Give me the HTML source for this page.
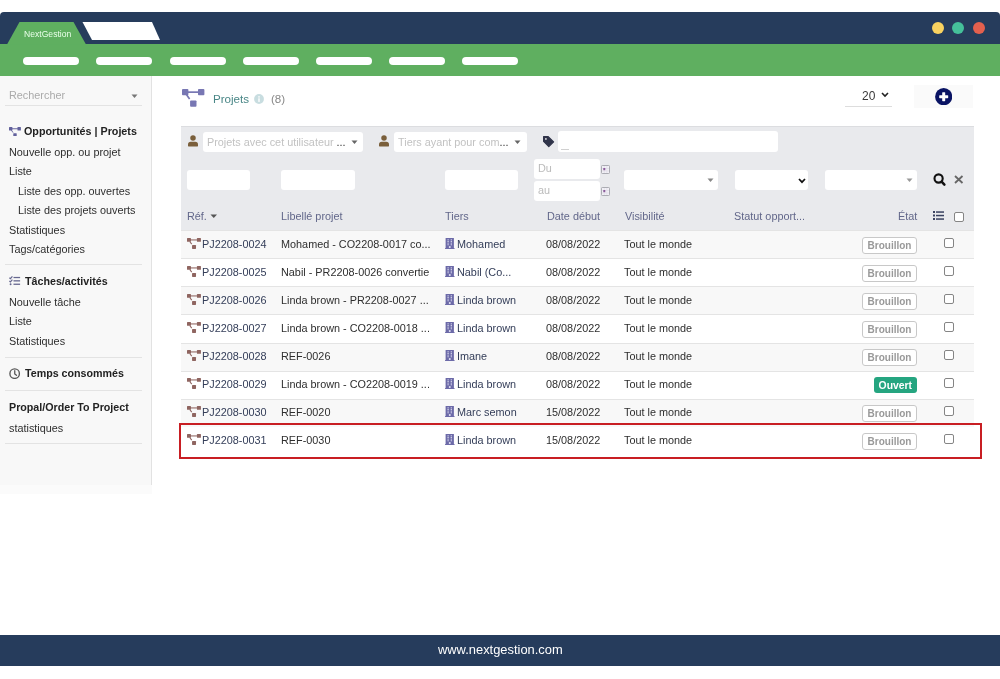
<!DOCTYPE html>
<html><head><meta charset="utf-8">
<style>
*{margin:0;padding:0;box-sizing:border-box}
html,body{width:1000px;height:679px;overflow:hidden;background:#fff;font-family:"Liberation Sans",sans-serif;position:relative;-webkit-font-smoothing:antialiased}
.abs{position:absolute}
.t{position:absolute;white-space:nowrap;will-change:transform}
.pill{position:absolute;top:57px;height:8px;width:56px;background:#fff;border-radius:4px}
.dot{position:absolute;top:21.7px;width:12px;height:12px;border-radius:50%}
.inp{position:absolute;background:#fff;border-radius:3px}
.sep{position:absolute;left:5px;width:137px;height:1px;background:#e3e3e3}
.badge{position:absolute;border-radius:3px;font-weight:bold;font-size:10px;text-align:center;will-change:transform}
.cb{position:absolute;width:10px;height:10px;border:1px solid #858585;border-radius:2px;background:#fff}
</style></head><body>
<div class="abs" style="left:0;top:12px;width:1000px;height:33px;background:#263c5c;border-radius:4px 4px 0 0"></div>
<div class="abs" style="left:0;top:44px;width:1000px;height:31.5px;background:#5faf60"></div>
<svg class="abs" style="left:0;top:0" width="200" height="50">
<polygon points="7,44.5 19.5,22 73.5,22 86,44.5" fill="#5faf60"/>
<polygon points="82.5,22 152,22 160,40 92,40" fill="#fff"/>
</svg>
<div class="t" style="left:23.5px;top:29.72px;font-size:8.6px;line-height:8.6px;color:#eaffea;font-weight:500;">NextGestion</div>
<div class="dot" style="left:932px;background:#f9d260"></div>
<div class="dot" style="left:952px;background:#45c09a"></div>
<div class="dot" style="left:973px;background:#e4604e"></div>
<div class="pill" style="left:23px"></div>
<div class="pill" style="left:96px"></div>
<div class="pill" style="left:170px"></div>
<div class="pill" style="left:243px"></div>
<div class="pill" style="left:316px"></div>
<div class="pill" style="left:389px"></div>
<div class="pill" style="left:462px"></div>
<div class="abs" style="left:0;top:75.5px;width:152px;height:409.5px;background:#f8f8f8;border-right:1px solid #e2e2e2"></div>
<div class="abs" style="left:0;top:485px;width:152px;height:9px;background:#fbfbfb"></div>
<div class="t" style="left:8.8px;top:89.72px;font-size:10.85px;line-height:10.85px;color:#aaa;">Rechercher</div>
<div class="abs" style="left:5px;top:104.5px;width:137px;height:1px;background:#e3e3e3"></div>
<svg class="abs" style="left:131px;top:94px" width="8" height="5"><polygon points="0.5,0.5 6.5,0.5 3.5,4" fill="#777"/></svg>
<svg class="abs" style="left:9.1px;top:126.5px" width="11.9" height="9.9" viewBox="0 0 22.4 17.7" preserveAspectRatio="none"><rect x="0" y="0" width="6.4" height="6.2" rx="0.9" fill="#62619c"/><rect x="16" y="0" width="6.4" height="6.2" rx="0.9" fill="#62619c"/><rect x="8.1" y="11.4" width="6.4" height="6.3" rx="0.9" fill="#62619c"/><rect x="5" y="2.3" width="12" height="1.7" fill="#62619c"/><path d="M4.4 5.6 L7.6 10" stroke="#62619c" stroke-width="1.7"/></svg>
<div class="t" style="left:24px;top:125.50px;font-size:10.75px;line-height:10.75px;color:#222;font-weight:bold;">Opportunités | Projets</div>
<div class="t" style="left:8.8px;top:146.62px;font-size:10.85px;line-height:10.85px;color:#2e2e2e;">Nouvelle opp. ou projet</div>
<div class="t" style="left:8.8px;top:165.62px;font-size:10.85px;line-height:10.85px;color:#2e2e2e;">Liste</div>
<div class="t" style="left:17.8px;top:185.52px;font-size:10.85px;line-height:10.85px;color:#2e2e2e;">Liste des opp. ouvertes</div>
<div class="t" style="left:17.8px;top:205.22px;font-size:10.85px;line-height:10.85px;color:#2e2e2e;">Liste des projets ouverts</div>
<div class="t" style="left:8.8px;top:225.12px;font-size:10.85px;line-height:10.85px;color:#2e2e2e;">Statistiques</div>
<div class="t" style="left:8.8px;top:244.42px;font-size:10.85px;line-height:10.85px;color:#2e2e2e;">Tags/catégories</div>
<div class="sep" style="top:263.8px"></div>
<svg class="abs" style="left:9px;top:276px" width="12" height="10" viewBox="0 0 12 10">
<path d="M0.4 1.7 L1.4 2.6 L3.4 0.4" stroke="#66688f" stroke-width="1.2" fill="none"/>
<path d="M0.4 5 L1.4 5.9 L3.4 3.7" stroke="#66688f" stroke-width="1.2" fill="none"/>
<circle cx="1.6" cy="8.2" r="0.95" fill="#66688f"/>
<rect x="4.5" y="0.9" width="6.6" height="1.25" fill="#66688f"/>
<rect x="4.5" y="4.2" width="6.6" height="1.3" fill="#66688f"/>
<rect x="4.5" y="7.6" width="6.6" height="1.3" fill="#66688f"/>
</svg>
<div class="t" style="left:25.2px;top:276.14px;font-size:10.7px;line-height:10.7px;color:#222;font-weight:bold;">Tâches/activités</div>
<div class="t" style="left:8.8px;top:297.12px;font-size:10.85px;line-height:10.85px;color:#2e2e2e;">Nouvelle tâche</div>
<div class="t" style="left:8.8px;top:316.42px;font-size:10.85px;line-height:10.85px;color:#2e2e2e;">Liste</div>
<div class="t" style="left:8.8px;top:335.82px;font-size:10.85px;line-height:10.85px;color:#2e2e2e;">Statistiques</div>
<div class="sep" style="top:357px"></div>
<svg class="abs" style="left:9px;top:367.5px" width="11.5" height="11.5" viewBox="0 0 11.5 11.5">
<circle cx="5.65" cy="5.65" r="4.75" stroke="#585858" stroke-width="1.35" fill="none"/>
<path d="M5.75 2.7 V6 L7.5 7.3" stroke="#585858" stroke-width="1.3" fill="none" stroke-linecap="round"/>
</svg>
<div class="t" style="left:25.2px;top:367.94px;font-size:10.7px;line-height:10.7px;color:#222;font-weight:bold;">Temps consommés</div>
<div class="sep" style="top:389.5px"></div>
<div class="t" style="left:8.8px;top:401.54px;font-size:10.7px;line-height:10.7px;color:#222;font-weight:bold;">Propal/Order To Project</div>
<div class="t" style="left:8.8px;top:422.82px;font-size:10.85px;line-height:10.85px;color:#2e2e2e;">statistiques</div>
<div class="sep" style="top:442.6px"></div>
<svg class="abs" style="left:182.3px;top:89px" width="22.4" height="17.7" viewBox="0 0 22.4 17.7" preserveAspectRatio="none"><rect x="0" y="0" width="6.4" height="6.2" rx="0.9" fill="#7877b3"/><rect x="16" y="0" width="6.4" height="6.2" rx="0.9" fill="#7877b3"/><rect x="8.1" y="11.4" width="6.4" height="6.3" rx="0.9" fill="#7877b3"/><rect x="5" y="2.3" width="12" height="1.7" fill="#7877b3"/><path d="M4.4 5.6 L7.6 10" stroke="#7877b3" stroke-width="1.7"/></svg>
<div class="t" style="left:213px;top:92.78px;font-size:11.6px;line-height:11.6px;color:#4a8787;">Projets</div>
<svg class="abs" style="left:254.2px;top:94.4px" width="10" height="10" viewBox="0 0 10 10"><circle cx="5" cy="5" r="4.9" fill="#c8dde0"/><rect x="4.3" y="2.2" width="1.4" height="1.4" fill="#fff"/><rect x="4.3" y="4.3" width="1.4" height="3.6" fill="#fff"/></svg>
<div class="t" style="left:271px;top:92.78px;font-size:11.6px;line-height:11.6px;color:#888;">(8)</div>
<div class="t" style="left:861.9px;top:90.04px;font-size:12px;line-height:12px;color:#3a3a3a;transform:scaleY(1.1);transform-origin:0 10.16px;">20</div>
<svg class="abs" style="left:880.7px;top:92.3px" width="8" height="6" viewBox="0 0 8 6"><path d="M1 1 L4 4 L7 1" stroke="#222" stroke-width="1.6" fill="none"/></svg>
<div class="abs" style="left:845px;top:105.6px;width:47px;height:1px;background:#ddd"></div>
<div class="abs" style="left:914px;top:85px;width:59px;height:23px;background:#fafafa"></div>
<svg class="abs" style="left:934.9px;top:87.9px" width="17.4" height="17.4" viewBox="0 0 17.4 17.4"><circle cx="8.7" cy="8.7" r="8.6" fill="#0a1464"/><rect x="4.2" y="7.2" width="9" height="3" rx="0.6" fill="#fff"/><rect x="7.2" y="4.2" width="3" height="9" rx="0.6" fill="#fff"/></svg>
<div class="abs" style="left:181px;top:126px;width:793px;height:105px;background:rgb(233,234,237);border-top:1px solid #dcdde0"></div>
<svg class="abs" style="left:188px;top:135px" width="10" height="12" viewBox="0 0 10 12"><circle cx="5" cy="3.1" r="2.75" fill="#7a5f3b"/><path d="M0 9.6 Q0 6.8 2.8 6.8 H7.2 Q10 6.8 10 9.6 V10.4 Q10 11.6 8.8 11.6 H1.2 Q0 11.6 0 10.4 Z" fill="#7a5f3b"/></svg>
<div class="inp" style="left:203px;top:132px;width:160px;height:19.5px"></div>
<div class="t" style="left:207px;top:137.12px;font-size:10.85px;line-height:10.85px;color:#c2c2c2;">Projets avec cet utilisateur <span style="color:#333">...</span></div>
<svg class="abs" style="left:351px;top:140px" width="7" height="5"><polygon points="0.5,0.5 6.5,0.5 3.5,4" fill="#666"/></svg>
<svg class="abs" style="left:379px;top:135px" width="10" height="12" viewBox="0 0 10 12"><circle cx="5" cy="3.1" r="2.75" fill="#7a5f3b"/><path d="M0 9.6 Q0 6.8 2.8 6.8 H7.2 Q10 6.8 10 9.6 V10.4 Q10 11.6 8.8 11.6 H1.2 Q0 11.6 0 10.4 Z" fill="#7a5f3b"/></svg>
<div class="inp" style="left:393.5px;top:132px;width:133px;height:19.5px"></div>
<div class="t" style="left:398px;top:137.12px;font-size:10.85px;line-height:10.85px;color:#c2c2c2;">Tiers ayant pour com<span style="color:#333">...</span></div>
<svg class="abs" style="left:514px;top:140px" width="7" height="5"><polygon points="0.5,0.5 6.5,0.5 3.5,4" fill="#666"/></svg>
<svg class="abs" style="left:542px;top:134.5px" width="13" height="13" viewBox="0 0 13 13"><path d="M1.6 1.6 H6.2 L11.6 6.9 L6.8 11.6 L1.6 6.4 Z" fill="#30344a" stroke="#30344a" stroke-width="1.2" stroke-linejoin="round"/><circle cx="3.9" cy="3.9" r="0.9" fill="#e6e7ea"/></svg>
<div class="inp" style="left:557.5px;top:131px;width:220px;height:21px"></div>
<div class="abs" style="left:561.2px;top:148.5px;width:7.5px;height:1px;background:#d0d0d0"></div>
<div class="inp" style="left:187.3px;top:170px;width:62.5px;height:20px"></div>
<div class="inp" style="left:281px;top:170px;width:73.5px;height:20px"></div>
<div class="inp" style="left:445px;top:170.4px;width:73px;height:19.6px"></div>
<div class="inp" style="left:534px;top:159px;width:65.5px;height:19.5px"></div>
<div class="inp" style="left:534px;top:181px;width:65.5px;height:19.5px"></div>
<div class="t" style="left:538px;top:163.32px;font-size:10.85px;line-height:10.85px;color:#bbb;">Du</div>
<div class="t" style="left:538px;top:185.12px;font-size:10.85px;line-height:10.85px;color:#bbb;">au</div>
<svg class="abs" style="left:601px;top:165px" width="9" height="9" viewBox="0 0 9 9"><rect x="0.5" y="0.5" width="8" height="8" rx="0.8" fill="#f2f1f6" stroke="#a4a4ac" stroke-width="0.9"/><path d="M1 3.5 H8 M1 6 H8 M3.3 1 V8 M5.8 1 V8" stroke="#ddd8e6" stroke-width="0.6"/><rect x="2.3" y="3" width="2" height="2.2" fill="#8a5a9a"/></svg>
<svg class="abs" style="left:601px;top:187px" width="9" height="9" viewBox="0 0 9 9"><rect x="0.5" y="0.5" width="8" height="8" rx="0.8" fill="#f2f1f6" stroke="#a4a4ac" stroke-width="0.9"/><path d="M1 3.5 H8 M1 6 H8 M3.3 1 V8 M5.8 1 V8" stroke="#ddd8e6" stroke-width="0.6"/><rect x="2.3" y="3" width="2" height="2.2" fill="#8a5a9a"/></svg>
<div class="inp" style="left:624.4px;top:170.4px;width:93.6px;height:19.6px"></div>
<svg class="abs" style="left:707px;top:178px" width="7" height="5"><polygon points="0.5,0.5 6.5,0.5 3.5,4" fill="#888"/></svg>
<div class="inp" style="left:735px;top:170.3px;width:73.4px;height:20px"></div>
<svg class="abs" style="left:797.5px;top:177.5px" width="8" height="6" viewBox="0 0 8 6"><path d="M1 1 L4 4.2 L7 1" stroke="#111" stroke-width="1.7" fill="none"/></svg>
<div class="inp" style="left:825.3px;top:170.3px;width:91.5px;height:20px"></div>
<svg class="abs" style="left:905.5px;top:178px" width="7" height="5"><polygon points="0.5,0.5 6.5,0.5 3.5,4" fill="#999"/></svg>
<svg class="abs" style="left:930px;top:171px" width="18" height="18" viewBox="0 0 18 18"><circle cx="8.6" cy="7.5" r="4.1" stroke="#111" stroke-width="2.1" fill="none"/><path d="M11.6 10.6 L14.4 13.6" stroke="#111" stroke-width="2.5" stroke-linecap="round"/></svg>
<svg class="abs" style="left:954.2px;top:175.3px" width="9.5" height="9" viewBox="0 0 9.5 9"><path d="M1 1 L8.5 8 M8.5 1 L1 8" stroke="#666" stroke-width="1.8"/></svg>
<div class="t" style="left:187px;top:210.62px;font-size:10.85px;line-height:10.85px;color:#62678a;">Réf.</div>
<svg class="abs" style="left:209.5px;top:213.5px" width="8" height="5"><polygon points="0.5,0.5 7,0.5 3.75,4" fill="#555"/></svg>
<div class="t" style="left:281.4px;top:210.62px;font-size:10.85px;line-height:10.85px;color:#62678a;">Libellé projet</div>
<div class="t" style="left:445px;top:210.62px;font-size:10.85px;line-height:10.85px;color:#62678a;">Tiers</div>
<div class="t" style="left:547px;top:210.62px;font-size:10.85px;line-height:10.85px;color:#62678a;">Date début</div>
<div class="t" style="left:625px;top:210.62px;font-size:10.85px;line-height:10.85px;color:#62678a;">Visibilité</div>
<div class="t" style="left:734.3px;top:210.62px;font-size:10.85px;line-height:10.85px;color:#62678a;">Statut opport...</div>
<div class="t" style="left:898px;top:210.62px;font-size:10.85px;line-height:10.85px;color:#62678a;">État</div>
<svg class="abs" style="left:933px;top:211px" width="11" height="9" viewBox="0 0 11 9"><rect x="0" y="0" width="2" height="2" fill="#3a4260"/><rect x="0" y="3.5" width="2" height="2" fill="#3a4260"/><rect x="0" y="7" width="2" height="2" fill="#3a4260"/><rect x="3" y="0.3" width="8" height="1.5" fill="#3a4260"/><rect x="3" y="3.8" width="8" height="1.5" fill="#3a4260"/><rect x="3" y="7.3" width="8" height="1.5" fill="#3a4260"/></svg>
<div class="cb" style="left:954px;top:211.5px"></div>
<div class="abs" style="left:181px;top:230.40px;width:793px;height:28.03px;background:#f8f8f8;border-top:1px solid #e4e4e4"></div>
<svg class="abs" style="left:187.05px;top:237.9px" width="13.95" height="10.9" viewBox="0 0 22.4 17.7" preserveAspectRatio="none"><rect x="0" y="0" width="6.4" height="6.2" rx="0.9" fill="#8f6560"/><rect x="16" y="0" width="6.4" height="6.2" rx="0.9" fill="#8f6560"/><rect x="8.1" y="11.4" width="6.4" height="6.3" rx="0.9" fill="#8f6560"/><rect x="5" y="2.3" width="12" height="1.7" fill="#8f6560"/><path d="M4.4 5.6 L7.6 10" stroke="#8f6560" stroke-width="1.7"/></svg>
<div class="t" style="left:201.7px;top:239.02px;font-size:10.85px;line-height:10.85px;color:#333d58;transform:scaleY(1.08);transform-origin:0 9.18px;">PJ2208-0024</div>
<div class="t" style="left:281.4px;top:239.02px;font-size:10.85px;line-height:10.85px;color:#2e2e2e;transform:scaleY(1.08);transform-origin:0 9.18px;">Mohamed - CO2208-0017 co...</div>
<svg class="abs" style="left:445.2px;top:238.00px" width="9.6" height="10.9" viewBox="0 0 9.6 10.9"><rect x="0.6" y="0" width="8.3" height="10.9" fill="#6c6aa8"/><rect x="0" y="10" width="9.6" height="0.9" fill="#6c6aa8"/><rect x="2.5" y="1.3" width="1.2" height="1.05" fill="#dcdcf0"/><rect x="2.5" y="2.95" width="1.2" height="1.05" fill="#dcdcf0"/><rect x="2.5" y="4.6" width="1.2" height="1.05" fill="#dcdcf0"/><rect x="2.5" y="6.25" width="1.2" height="1.05" fill="#dcdcf0"/><rect x="5.7" y="1.3" width="1.2" height="1.05" fill="#dcdcf0"/><rect x="5.7" y="2.95" width="1.2" height="1.05" fill="#dcdcf0"/><rect x="5.7" y="4.6" width="1.2" height="1.05" fill="#dcdcf0"/><rect x="5.7" y="6.25" width="1.2" height="1.05" fill="#dcdcf0"/><rect x="3.9" y="8.1" width="1.7" height="1.9" fill="#dcdcf0"/></svg>
<div class="t" style="left:456.6px;top:239.02px;font-size:10.85px;line-height:10.85px;color:#333d58;transform:scaleY(1.08);transform-origin:0 9.18px;">Mohamed</div>
<div class="t" style="left:545.6px;top:239.02px;font-size:10.85px;line-height:10.85px;color:#2e2e2e;transform:scaleY(1.08);transform-origin:0 9.18px;">08/08/2022</div>
<div class="t" style="left:624.4px;top:239.02px;font-size:10.85px;line-height:10.85px;color:#2e2e2e;transform:scaleY(1.08);transform-origin:0 9.18px;">Tout le monde</div>
<div class="badge" style="left:862px;top:236.80px;width:55px;height:16.8px;border:1px solid #c8c8c8;background:#fff;color:#999;line-height:16.4px">Brouillon</div>
<div class="cb" style="left:944px;top:238.10px"></div>
<div class="abs" style="left:181px;top:258.43px;width:793px;height:28.03px;background:#fff;border-top:1px solid #e4e4e4"></div>
<svg class="abs" style="left:187.05px;top:265.93px" width="13.95" height="10.9" viewBox="0 0 22.4 17.7" preserveAspectRatio="none"><rect x="0" y="0" width="6.4" height="6.2" rx="0.9" fill="#8f6560"/><rect x="16" y="0" width="6.4" height="6.2" rx="0.9" fill="#8f6560"/><rect x="8.1" y="11.4" width="6.4" height="6.3" rx="0.9" fill="#8f6560"/><rect x="5" y="2.3" width="12" height="1.7" fill="#8f6560"/><path d="M4.4 5.6 L7.6 10" stroke="#8f6560" stroke-width="1.7"/></svg>
<div class="t" style="left:201.7px;top:267.05px;font-size:10.85px;line-height:10.85px;color:#333d58;transform:scaleY(1.08);transform-origin:0 9.18px;">PJ2208-0025</div>
<div class="t" style="left:281.4px;top:267.05px;font-size:10.85px;line-height:10.85px;color:#2e2e2e;transform:scaleY(1.08);transform-origin:0 9.18px;">Nabil - PR2208-0026 convertie</div>
<svg class="abs" style="left:445.2px;top:266.03px" width="9.6" height="10.9" viewBox="0 0 9.6 10.9"><rect x="0.6" y="0" width="8.3" height="10.9" fill="#6c6aa8"/><rect x="0" y="10" width="9.6" height="0.9" fill="#6c6aa8"/><rect x="2.5" y="1.3" width="1.2" height="1.05" fill="#dcdcf0"/><rect x="2.5" y="2.95" width="1.2" height="1.05" fill="#dcdcf0"/><rect x="2.5" y="4.6" width="1.2" height="1.05" fill="#dcdcf0"/><rect x="2.5" y="6.25" width="1.2" height="1.05" fill="#dcdcf0"/><rect x="5.7" y="1.3" width="1.2" height="1.05" fill="#dcdcf0"/><rect x="5.7" y="2.95" width="1.2" height="1.05" fill="#dcdcf0"/><rect x="5.7" y="4.6" width="1.2" height="1.05" fill="#dcdcf0"/><rect x="5.7" y="6.25" width="1.2" height="1.05" fill="#dcdcf0"/><rect x="3.9" y="8.1" width="1.7" height="1.9" fill="#dcdcf0"/></svg>
<div class="t" style="left:456.6px;top:267.05px;font-size:10.85px;line-height:10.85px;color:#333d58;transform:scaleY(1.08);transform-origin:0 9.18px;">Nabil (Co...</div>
<div class="t" style="left:545.6px;top:267.05px;font-size:10.85px;line-height:10.85px;color:#2e2e2e;transform:scaleY(1.08);transform-origin:0 9.18px;">08/08/2022</div>
<div class="t" style="left:624.4px;top:267.05px;font-size:10.85px;line-height:10.85px;color:#2e2e2e;transform:scaleY(1.08);transform-origin:0 9.18px;">Tout le monde</div>
<div class="badge" style="left:862px;top:264.83px;width:55px;height:16.8px;border:1px solid #c8c8c8;background:#fff;color:#999;line-height:16.4px">Brouillon</div>
<div class="cb" style="left:944px;top:266.13px"></div>
<div class="abs" style="left:181px;top:286.46px;width:793px;height:28.03px;background:#f8f8f8;border-top:1px solid #e4e4e4"></div>
<svg class="abs" style="left:187.05px;top:293.96000000000004px" width="13.95" height="10.9" viewBox="0 0 22.4 17.7" preserveAspectRatio="none"><rect x="0" y="0" width="6.4" height="6.2" rx="0.9" fill="#8f6560"/><rect x="16" y="0" width="6.4" height="6.2" rx="0.9" fill="#8f6560"/><rect x="8.1" y="11.4" width="6.4" height="6.3" rx="0.9" fill="#8f6560"/><rect x="5" y="2.3" width="12" height="1.7" fill="#8f6560"/><path d="M4.4 5.6 L7.6 10" stroke="#8f6560" stroke-width="1.7"/></svg>
<div class="t" style="left:201.7px;top:295.08px;font-size:10.85px;line-height:10.85px;color:#333d58;transform:scaleY(1.08);transform-origin:0 9.18px;">PJ2208-0026</div>
<div class="t" style="left:281.4px;top:295.08px;font-size:10.85px;line-height:10.85px;color:#2e2e2e;transform:scaleY(1.08);transform-origin:0 9.18px;">Linda brown - PR2208-0027 ...</div>
<svg class="abs" style="left:445.2px;top:294.06px" width="9.6" height="10.9" viewBox="0 0 9.6 10.9"><rect x="0.6" y="0" width="8.3" height="10.9" fill="#6c6aa8"/><rect x="0" y="10" width="9.6" height="0.9" fill="#6c6aa8"/><rect x="2.5" y="1.3" width="1.2" height="1.05" fill="#dcdcf0"/><rect x="2.5" y="2.95" width="1.2" height="1.05" fill="#dcdcf0"/><rect x="2.5" y="4.6" width="1.2" height="1.05" fill="#dcdcf0"/><rect x="2.5" y="6.25" width="1.2" height="1.05" fill="#dcdcf0"/><rect x="5.7" y="1.3" width="1.2" height="1.05" fill="#dcdcf0"/><rect x="5.7" y="2.95" width="1.2" height="1.05" fill="#dcdcf0"/><rect x="5.7" y="4.6" width="1.2" height="1.05" fill="#dcdcf0"/><rect x="5.7" y="6.25" width="1.2" height="1.05" fill="#dcdcf0"/><rect x="3.9" y="8.1" width="1.7" height="1.9" fill="#dcdcf0"/></svg>
<div class="t" style="left:456.6px;top:295.08px;font-size:10.85px;line-height:10.85px;color:#333d58;transform:scaleY(1.08);transform-origin:0 9.18px;">Linda brown</div>
<div class="t" style="left:545.6px;top:295.08px;font-size:10.85px;line-height:10.85px;color:#2e2e2e;transform:scaleY(1.08);transform-origin:0 9.18px;">08/08/2022</div>
<div class="t" style="left:624.4px;top:295.08px;font-size:10.85px;line-height:10.85px;color:#2e2e2e;transform:scaleY(1.08);transform-origin:0 9.18px;">Tout le monde</div>
<div class="badge" style="left:862px;top:292.86px;width:55px;height:16.8px;border:1px solid #c8c8c8;background:#fff;color:#999;line-height:16.4px">Brouillon</div>
<div class="cb" style="left:944px;top:294.16px"></div>
<div class="abs" style="left:181px;top:314.49px;width:793px;height:28.03px;background:#fff;border-top:1px solid #e4e4e4"></div>
<svg class="abs" style="left:187.05px;top:321.99px" width="13.95" height="10.9" viewBox="0 0 22.4 17.7" preserveAspectRatio="none"><rect x="0" y="0" width="6.4" height="6.2" rx="0.9" fill="#8f6560"/><rect x="16" y="0" width="6.4" height="6.2" rx="0.9" fill="#8f6560"/><rect x="8.1" y="11.4" width="6.4" height="6.3" rx="0.9" fill="#8f6560"/><rect x="5" y="2.3" width="12" height="1.7" fill="#8f6560"/><path d="M4.4 5.6 L7.6 10" stroke="#8f6560" stroke-width="1.7"/></svg>
<div class="t" style="left:201.7px;top:323.11px;font-size:10.85px;line-height:10.85px;color:#333d58;transform:scaleY(1.08);transform-origin:0 9.18px;">PJ2208-0027</div>
<div class="t" style="left:281.4px;top:323.11px;font-size:10.85px;line-height:10.85px;color:#2e2e2e;transform:scaleY(1.08);transform-origin:0 9.18px;">Linda brown - CO2208-0018 ...</div>
<svg class="abs" style="left:445.2px;top:322.09px" width="9.6" height="10.9" viewBox="0 0 9.6 10.9"><rect x="0.6" y="0" width="8.3" height="10.9" fill="#6c6aa8"/><rect x="0" y="10" width="9.6" height="0.9" fill="#6c6aa8"/><rect x="2.5" y="1.3" width="1.2" height="1.05" fill="#dcdcf0"/><rect x="2.5" y="2.95" width="1.2" height="1.05" fill="#dcdcf0"/><rect x="2.5" y="4.6" width="1.2" height="1.05" fill="#dcdcf0"/><rect x="2.5" y="6.25" width="1.2" height="1.05" fill="#dcdcf0"/><rect x="5.7" y="1.3" width="1.2" height="1.05" fill="#dcdcf0"/><rect x="5.7" y="2.95" width="1.2" height="1.05" fill="#dcdcf0"/><rect x="5.7" y="4.6" width="1.2" height="1.05" fill="#dcdcf0"/><rect x="5.7" y="6.25" width="1.2" height="1.05" fill="#dcdcf0"/><rect x="3.9" y="8.1" width="1.7" height="1.9" fill="#dcdcf0"/></svg>
<div class="t" style="left:456.6px;top:323.11px;font-size:10.85px;line-height:10.85px;color:#333d58;transform:scaleY(1.08);transform-origin:0 9.18px;">Linda brown</div>
<div class="t" style="left:545.6px;top:323.11px;font-size:10.85px;line-height:10.85px;color:#2e2e2e;transform:scaleY(1.08);transform-origin:0 9.18px;">08/08/2022</div>
<div class="t" style="left:624.4px;top:323.11px;font-size:10.85px;line-height:10.85px;color:#2e2e2e;transform:scaleY(1.08);transform-origin:0 9.18px;">Tout le monde</div>
<div class="badge" style="left:862px;top:320.89px;width:55px;height:16.8px;border:1px solid #c8c8c8;background:#fff;color:#999;line-height:16.4px">Brouillon</div>
<div class="cb" style="left:944px;top:322.19px"></div>
<div class="abs" style="left:181px;top:342.52px;width:793px;height:28.03px;background:#f8f8f8;border-top:1px solid #e4e4e4"></div>
<svg class="abs" style="left:187.05px;top:350.02px" width="13.95" height="10.9" viewBox="0 0 22.4 17.7" preserveAspectRatio="none"><rect x="0" y="0" width="6.4" height="6.2" rx="0.9" fill="#8f6560"/><rect x="16" y="0" width="6.4" height="6.2" rx="0.9" fill="#8f6560"/><rect x="8.1" y="11.4" width="6.4" height="6.3" rx="0.9" fill="#8f6560"/><rect x="5" y="2.3" width="12" height="1.7" fill="#8f6560"/><path d="M4.4 5.6 L7.6 10" stroke="#8f6560" stroke-width="1.7"/></svg>
<div class="t" style="left:201.7px;top:351.14px;font-size:10.85px;line-height:10.85px;color:#333d58;transform:scaleY(1.08);transform-origin:0 9.18px;">PJ2208-0028</div>
<div class="t" style="left:281.4px;top:351.14px;font-size:10.85px;line-height:10.85px;color:#2e2e2e;transform:scaleY(1.08);transform-origin:0 9.18px;">REF-0026</div>
<svg class="abs" style="left:445.2px;top:350.12px" width="9.6" height="10.9" viewBox="0 0 9.6 10.9"><rect x="0.6" y="0" width="8.3" height="10.9" fill="#6c6aa8"/><rect x="0" y="10" width="9.6" height="0.9" fill="#6c6aa8"/><rect x="2.5" y="1.3" width="1.2" height="1.05" fill="#dcdcf0"/><rect x="2.5" y="2.95" width="1.2" height="1.05" fill="#dcdcf0"/><rect x="2.5" y="4.6" width="1.2" height="1.05" fill="#dcdcf0"/><rect x="2.5" y="6.25" width="1.2" height="1.05" fill="#dcdcf0"/><rect x="5.7" y="1.3" width="1.2" height="1.05" fill="#dcdcf0"/><rect x="5.7" y="2.95" width="1.2" height="1.05" fill="#dcdcf0"/><rect x="5.7" y="4.6" width="1.2" height="1.05" fill="#dcdcf0"/><rect x="5.7" y="6.25" width="1.2" height="1.05" fill="#dcdcf0"/><rect x="3.9" y="8.1" width="1.7" height="1.9" fill="#dcdcf0"/></svg>
<div class="t" style="left:456.6px;top:351.14px;font-size:10.85px;line-height:10.85px;color:#333d58;transform:scaleY(1.08);transform-origin:0 9.18px;">Imane</div>
<div class="t" style="left:545.6px;top:351.14px;font-size:10.85px;line-height:10.85px;color:#2e2e2e;transform:scaleY(1.08);transform-origin:0 9.18px;">08/08/2022</div>
<div class="t" style="left:624.4px;top:351.14px;font-size:10.85px;line-height:10.85px;color:#2e2e2e;transform:scaleY(1.08);transform-origin:0 9.18px;">Tout le monde</div>
<div class="badge" style="left:862px;top:348.92px;width:55px;height:16.8px;border:1px solid #c8c8c8;background:#fff;color:#999;line-height:16.4px">Brouillon</div>
<div class="cb" style="left:944px;top:350.22px"></div>
<div class="abs" style="left:181px;top:370.55px;width:793px;height:28.03px;background:#fff;border-top:1px solid #e4e4e4"></div>
<svg class="abs" style="left:187.05px;top:378.05px" width="13.95" height="10.9" viewBox="0 0 22.4 17.7" preserveAspectRatio="none"><rect x="0" y="0" width="6.4" height="6.2" rx="0.9" fill="#8f6560"/><rect x="16" y="0" width="6.4" height="6.2" rx="0.9" fill="#8f6560"/><rect x="8.1" y="11.4" width="6.4" height="6.3" rx="0.9" fill="#8f6560"/><rect x="5" y="2.3" width="12" height="1.7" fill="#8f6560"/><path d="M4.4 5.6 L7.6 10" stroke="#8f6560" stroke-width="1.7"/></svg>
<div class="t" style="left:201.7px;top:379.17px;font-size:10.85px;line-height:10.85px;color:#333d58;transform:scaleY(1.08);transform-origin:0 9.18px;">PJ2208-0029</div>
<div class="t" style="left:281.4px;top:379.17px;font-size:10.85px;line-height:10.85px;color:#2e2e2e;transform:scaleY(1.08);transform-origin:0 9.18px;">Linda brown - CO2208-0019 ...</div>
<svg class="abs" style="left:445.2px;top:378.15px" width="9.6" height="10.9" viewBox="0 0 9.6 10.9"><rect x="0.6" y="0" width="8.3" height="10.9" fill="#6c6aa8"/><rect x="0" y="10" width="9.6" height="0.9" fill="#6c6aa8"/><rect x="2.5" y="1.3" width="1.2" height="1.05" fill="#dcdcf0"/><rect x="2.5" y="2.95" width="1.2" height="1.05" fill="#dcdcf0"/><rect x="2.5" y="4.6" width="1.2" height="1.05" fill="#dcdcf0"/><rect x="2.5" y="6.25" width="1.2" height="1.05" fill="#dcdcf0"/><rect x="5.7" y="1.3" width="1.2" height="1.05" fill="#dcdcf0"/><rect x="5.7" y="2.95" width="1.2" height="1.05" fill="#dcdcf0"/><rect x="5.7" y="4.6" width="1.2" height="1.05" fill="#dcdcf0"/><rect x="5.7" y="6.25" width="1.2" height="1.05" fill="#dcdcf0"/><rect x="3.9" y="8.1" width="1.7" height="1.9" fill="#dcdcf0"/></svg>
<div class="t" style="left:456.6px;top:379.17px;font-size:10.85px;line-height:10.85px;color:#333d58;transform:scaleY(1.08);transform-origin:0 9.18px;">Linda brown</div>
<div class="t" style="left:545.6px;top:379.17px;font-size:10.85px;line-height:10.85px;color:#2e2e2e;transform:scaleY(1.08);transform-origin:0 9.18px;">08/08/2022</div>
<div class="t" style="left:624.4px;top:379.17px;font-size:10.85px;line-height:10.85px;color:#2e2e2e;transform:scaleY(1.08);transform-origin:0 9.18px;">Tout le monde</div>
<div class="badge" style="left:874px;top:376.85px;width:42.7px;height:16.2px;background:#25a580;color:#fff;line-height:17.6px;font-size:10.4px">Ouvert</div>
<div class="cb" style="left:944px;top:378.25px"></div>
<div class="abs" style="left:181px;top:398.58px;width:793px;height:28.03px;background:#f8f8f8;border-top:1px solid #e4e4e4"></div>
<svg class="abs" style="left:187.05px;top:406.08000000000004px" width="13.95" height="10.9" viewBox="0 0 22.4 17.7" preserveAspectRatio="none"><rect x="0" y="0" width="6.4" height="6.2" rx="0.9" fill="#8f6560"/><rect x="16" y="0" width="6.4" height="6.2" rx="0.9" fill="#8f6560"/><rect x="8.1" y="11.4" width="6.4" height="6.3" rx="0.9" fill="#8f6560"/><rect x="5" y="2.3" width="12" height="1.7" fill="#8f6560"/><path d="M4.4 5.6 L7.6 10" stroke="#8f6560" stroke-width="1.7"/></svg>
<div class="t" style="left:201.7px;top:407.20px;font-size:10.85px;line-height:10.85px;color:#333d58;transform:scaleY(1.08);transform-origin:0 9.18px;">PJ2208-0030</div>
<div class="t" style="left:281.4px;top:407.20px;font-size:10.85px;line-height:10.85px;color:#2e2e2e;transform:scaleY(1.08);transform-origin:0 9.18px;">REF-0020</div>
<svg class="abs" style="left:445.2px;top:406.18px" width="9.6" height="10.9" viewBox="0 0 9.6 10.9"><rect x="0.6" y="0" width="8.3" height="10.9" fill="#6c6aa8"/><rect x="0" y="10" width="9.6" height="0.9" fill="#6c6aa8"/><rect x="2.5" y="1.3" width="1.2" height="1.05" fill="#dcdcf0"/><rect x="2.5" y="2.95" width="1.2" height="1.05" fill="#dcdcf0"/><rect x="2.5" y="4.6" width="1.2" height="1.05" fill="#dcdcf0"/><rect x="2.5" y="6.25" width="1.2" height="1.05" fill="#dcdcf0"/><rect x="5.7" y="1.3" width="1.2" height="1.05" fill="#dcdcf0"/><rect x="5.7" y="2.95" width="1.2" height="1.05" fill="#dcdcf0"/><rect x="5.7" y="4.6" width="1.2" height="1.05" fill="#dcdcf0"/><rect x="5.7" y="6.25" width="1.2" height="1.05" fill="#dcdcf0"/><rect x="3.9" y="8.1" width="1.7" height="1.9" fill="#dcdcf0"/></svg>
<div class="t" style="left:456.6px;top:407.20px;font-size:10.85px;line-height:10.85px;color:#333d58;transform:scaleY(1.08);transform-origin:0 9.18px;">Marc semon</div>
<div class="t" style="left:545.6px;top:407.20px;font-size:10.85px;line-height:10.85px;color:#2e2e2e;transform:scaleY(1.08);transform-origin:0 9.18px;">15/08/2022</div>
<div class="t" style="left:624.4px;top:407.20px;font-size:10.85px;line-height:10.85px;color:#2e2e2e;transform:scaleY(1.08);transform-origin:0 9.18px;">Tout le monde</div>
<div class="badge" style="left:862px;top:404.98px;width:55px;height:16.8px;border:1px solid #c8c8c8;background:#fff;color:#999;line-height:16.4px">Brouillon</div>
<div class="cb" style="left:944px;top:406.28px"></div>
<div class="abs" style="left:181px;top:426.61px;width:793px;height:28.03px;background:#fff;border-top:1px solid #fff"></div>
<svg class="abs" style="left:187.05px;top:434.11px" width="13.95" height="10.9" viewBox="0 0 22.4 17.7" preserveAspectRatio="none"><rect x="0" y="0" width="6.4" height="6.2" rx="0.9" fill="#8f6560"/><rect x="16" y="0" width="6.4" height="6.2" rx="0.9" fill="#8f6560"/><rect x="8.1" y="11.4" width="6.4" height="6.3" rx="0.9" fill="#8f6560"/><rect x="5" y="2.3" width="12" height="1.7" fill="#8f6560"/><path d="M4.4 5.6 L7.6 10" stroke="#8f6560" stroke-width="1.7"/></svg>
<div class="t" style="left:201.7px;top:435.23px;font-size:10.85px;line-height:10.85px;color:#333d58;transform:scaleY(1.08);transform-origin:0 9.18px;">PJ2208-0031</div>
<div class="t" style="left:281.4px;top:435.23px;font-size:10.85px;line-height:10.85px;color:#2e2e2e;transform:scaleY(1.08);transform-origin:0 9.18px;">REF-0030</div>
<svg class="abs" style="left:445.2px;top:434.21px" width="9.6" height="10.9" viewBox="0 0 9.6 10.9"><rect x="0.6" y="0" width="8.3" height="10.9" fill="#6c6aa8"/><rect x="0" y="10" width="9.6" height="0.9" fill="#6c6aa8"/><rect x="2.5" y="1.3" width="1.2" height="1.05" fill="#dcdcf0"/><rect x="2.5" y="2.95" width="1.2" height="1.05" fill="#dcdcf0"/><rect x="2.5" y="4.6" width="1.2" height="1.05" fill="#dcdcf0"/><rect x="2.5" y="6.25" width="1.2" height="1.05" fill="#dcdcf0"/><rect x="5.7" y="1.3" width="1.2" height="1.05" fill="#dcdcf0"/><rect x="5.7" y="2.95" width="1.2" height="1.05" fill="#dcdcf0"/><rect x="5.7" y="4.6" width="1.2" height="1.05" fill="#dcdcf0"/><rect x="5.7" y="6.25" width="1.2" height="1.05" fill="#dcdcf0"/><rect x="3.9" y="8.1" width="1.7" height="1.9" fill="#dcdcf0"/></svg>
<div class="t" style="left:456.6px;top:435.23px;font-size:10.85px;line-height:10.85px;color:#333d58;transform:scaleY(1.08);transform-origin:0 9.18px;">Linda brown</div>
<div class="t" style="left:545.6px;top:435.23px;font-size:10.85px;line-height:10.85px;color:#2e2e2e;transform:scaleY(1.08);transform-origin:0 9.18px;">15/08/2022</div>
<div class="t" style="left:624.4px;top:435.23px;font-size:10.85px;line-height:10.85px;color:#2e2e2e;transform:scaleY(1.08);transform-origin:0 9.18px;">Tout le monde</div>
<div class="badge" style="left:862px;top:433.01px;width:55px;height:16.8px;border:1px solid #c8c8c8;background:#fff;color:#999;line-height:16.4px">Brouillon</div>
<div class="cb" style="left:944px;top:434.31px"></div>
<div class="abs" style="left:179px;top:423.3px;width:802.5px;height:35.3px;border:2px solid #c81e23"></div>
<div class="abs" style="left:0;top:635px;width:1000px;height:31px;background:#263c5c"></div>
<div class="t" style="left:437.6px;top:644.08px;font-size:12.9px;line-height:12.9px;color:#fff;">www.nextgestion.com</div>
</body></html>
